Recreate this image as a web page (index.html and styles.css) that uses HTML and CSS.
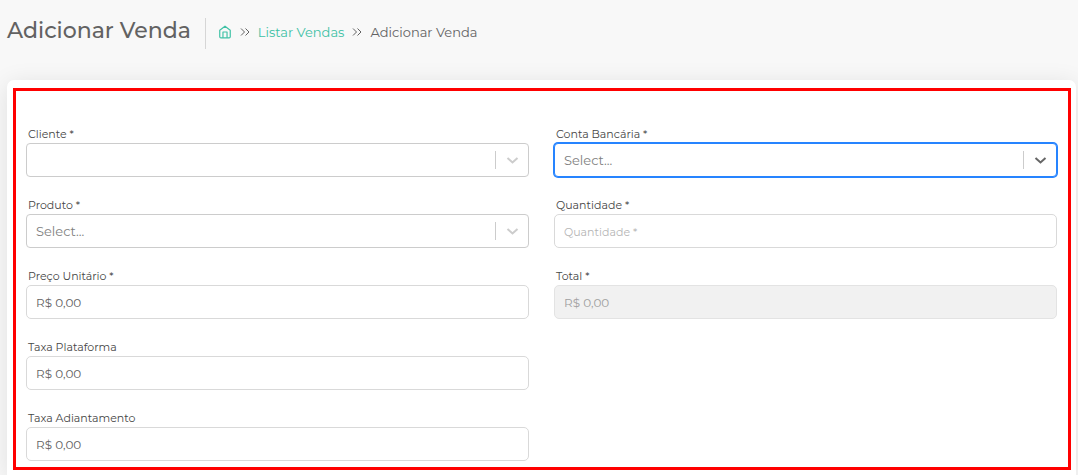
FILE: index.html
```html
<!DOCTYPE html>
<html lang="pt-BR">
<head>
    <meta charset="utf-8">
    <title>Adicionar Venda</title>
    <link rel="stylesheet" href="styles.css">
</head>
<body>
<header class="header">
    <h1 class="title">Adicionar Venda</h1>
    <nav class="breadcrumb" aria-label="breadcrumb">
        <a href="#" aria-label="Home">
            <svg class="home" viewBox="0 0 24 24"><path d="M3 9l9-7 9 7v11a2 2 0 0 1-2 2H5a2 2 0 0 1-2-2z"/><path d="M8.500 22V12h7v10"/></svg>
        </a>
        <svg class="sep" viewBox="0 0 10 10"><path d="M1 1.500l3.500 3.500L1 8.500M5.500 1.500L9 5 5.500 8.500"/></svg>
        <a href="#">Listar Vendas</a>
        <svg class="sep" viewBox="0 0 10 10"><path d="M1 1.500l3.500 3.500L1 8.500M5.500 1.500L9 5 5.500 8.500"/></svg>
        <span>Adicionar Venda</span>
    </nav>
</header>
<main class="card">
    <form class="form">
        <div class="field">
            <label for="cliente">Cliente *</label>
            <div class="select">
                <select id="cliente"><option value=""></option></select>
                <svg class="arrow" viewBox="0 0 18 18"><path d="M4 7l5 4.500L14 7"/></svg>
            </div>
        </div>
        <div class="field">
            <label for="conta">Conta Bancária *</label>
            <div class="select active">
                <select id="conta"><option value="">Select...</option></select>
                <svg class="arrow" viewBox="0 0 18 18"><path d="M4 7l5 4.500L14 7"/></svg>
            </div>
        </div>
        <div class="field">
            <label for="produto">Produto *</label>
            <div class="select">
                <select id="produto"><option value="">Select...</option></select>
                <svg class="arrow" viewBox="0 0 18 18"><path d="M4 7l5 4.500L14 7"/></svg>
            </div>
        </div>
        <div class="field">
            <label for="quantidade">Quantidade *</label>
            <input id="quantidade" type="text" placeholder="Quantidade *">
        </div>
        <div class="field">
            <label for="preco">Preço Unitário *</label>
            <input id="preco" type="text" value="R$ 0,00">
        </div>
        <div class="field">
            <label for="total">Total *</label>
            <input id="total" type="text" value="R$ 0,00" disabled>
        </div>
        <div class="field first">
            <label for="plataforma">Taxa Plataforma</label>
            <input id="plataforma" type="text" value="R$ 0,00">
        </div>
        <div class="field first">
            <label for="adiantamento">Taxa Adiantamento</label>
            <input id="adiantamento" type="text" value="R$ 0,00">
        </div>
    </form>
</main>
</body>
</html>
```
FILE: styles.css
```css
* {
    box-sizing: border-box;
}
body {
    margin: 0;
    padding: 18px 2px 0 7px;
    min-height: 100vh;
    display: flex;
    flex-direction: column;
    background: #f8f8f8;
    color: #626262;
    font-family: Montserrat, Inter, sans-serif;
    font-size: 13px;
}
.header {
    display: flex;
    align-items: flex-start;
    margin-bottom: 31px;
}
.title {
    margin: 0;
    padding-right: 14px;
    border-right: 1px solid #d6d6d6;
    font-size: 22px;
    font-weight: 500;
    line-height: 25px;
    padding-bottom: 6px;
}
.breadcrumb {
    display: flex;
    align-items: center;
    gap: 8px;
    height: 28px;
    padding-left: 12px;
}
.breadcrumb a {
    color: #3dc1a5;
    text-decoration: none;
}
.breadcrumb svg {
    display: block;
    fill: none;
    stroke: currentColor;
}
.home {
    width: 14px;
    height: 14px;
    stroke-width: 2;
    stroke-linejoin: round;
}
.sep {
    width: 10px;
    height: 10px;
}
.card {
    flex: 1;
    padding: 8px 5px 5px 6px;
    background: #fff;
    border-radius: 7px 7px 0 0;
    box-shadow: 0 4px 25px rgba(0, 0, 0, 0.1);
}
.form {
    display: grid;
    grid-template-columns: 1fr 1fr;
    gap: 19px 25px;
    padding: 34px 11px 6px 10px;
    border: 3px solid #f00;
}
.first {
    grid-column: 1;
}
.field label {
    display: block;
    padding-left: 2px;
    font-size: 11px;
    line-height: 18px;
    color: #464646;
}
.field input,
.field select {
    display: block;
    width: 100%;
    height: 34px;
    padding: 0 9px;
    border: 1px solid #d9d9d9;
    border-radius: 5px;
    background: #fff;
    color: #5f5f5f;
    font-family: inherit;
    font-size: 12px;
    outline: none;
}
.field input::placeholder {
    color: #b5b5b5;
    font-size: 11px;
}
.field input:disabled {
    background: #f1f1f1;
    border-color: #e3e3e3;
    color: #a0a0a0;
}
.select {
    position: relative;
    color: #ccc;
}
.field select {
    appearance: none;
    padding-right: 42px;
    border-color: #ccc;
    border-radius: 4px;
    color: #808080;
    font-size: 13px;
}
.arrow {
    position: absolute;
    top: 8px;
    right: 0;
    width: 34px;
    height: 18px;
    border-left: 1px solid #ccc;
    fill: none;
    stroke: currentColor;
    stroke-width: 2;
    pointer-events: none;
}
.active {
    color: #666;
}
.active select {
    border-color: #2684ff;
    box-shadow: 0 0 0 1px #2684ff;
}
```
